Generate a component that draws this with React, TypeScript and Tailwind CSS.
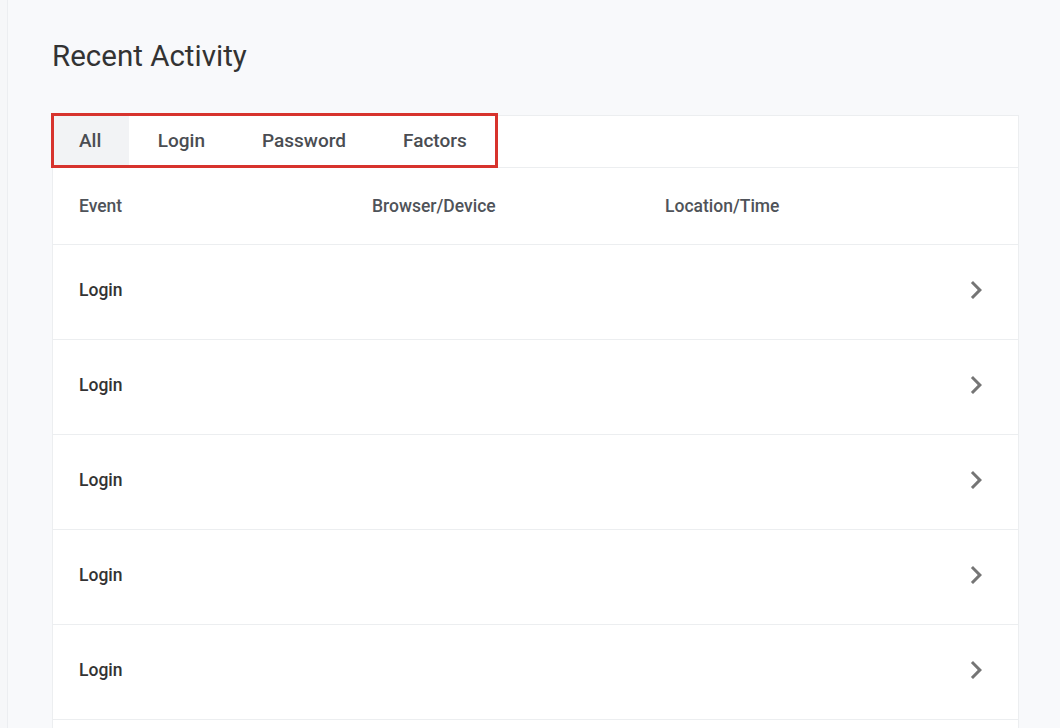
const tabs = ["All", "Login", "Password", "Factors"];
const rows = ["Login", "Login", "Login", "Login", "Login", "Login"];

function ChevronRight() {
  return (
    <svg className="h-9 w-9 text-[#757575]" viewBox="0 0 24 24" fill="currentColor">
      <path d="M10 6L8.59 7.41 13.17 12l-4.58 4.59L10 18l6-6z" />
    </svg>
  );
}

export default function App() {
  return (
    <div
      className="flex h-[728px] overflow-hidden bg-[#f8f9fb] text-[#333]"
      style={{ fontFamily: "Roboto, 'Liberation Sans', sans-serif" }}
    >
      <div className="w-[8px] shrink-0 border-r border-[#eceef1] bg-[#f6f7f9]" />
      <main className="flex-1 pl-[44px] pr-[41px] pt-[38px]">
        <h1 className="mb-[41px] text-[29.5px] font-normal leading-[36px] text-[#333]">
          Recent Activity
        </h1>

        <div className="border border-[#eceef0] bg-white">
          {/* Tabs */}
          <div className="relative flex h-[52px] items-stretch border-b border-[#eceef0]">
            {tabs.map((tab, i) => (
              <button
                key={tab}
                className={`flex items-center text-[19px] font-medium text-[#4a4d52] ${
                  i === 0 ? "bg-[#f2f3f5] pl-[26px] pr-[28px]" : "px-[28.5px]"
                }`}
              >
                {tab}
              </button>
            ))}
            <div className="pointer-events-none absolute left-[-2px] top-[-3px] h-[55px] w-[447px] border-[3px] border-[#d7332d]" />
          </div>

          {/* Header */}
          <div className="grid h-[77px] grid-cols-[293px_293px_1fr] items-center border-b border-[#eceef0] px-[26px] text-[17.5px] font-medium text-[#4f5359]">
            <span>Event</span>
            <span>Browser/Device</span>
            <span>Location/Time</span>
          </div>

          {/* Rows */}
          {rows.map((row, i) => (
            <div
              key={i}
              className="flex h-[95px] items-center justify-between border-b border-[#eceef0] pb-[4px] pl-[26px] pr-[24px]"
            >
              <span className="text-[17.5px] font-medium text-[#333]">{row}</span>
              <ChevronRight />
            </div>
          ))}
        </div>
      </main>
    </div>
  );
}
